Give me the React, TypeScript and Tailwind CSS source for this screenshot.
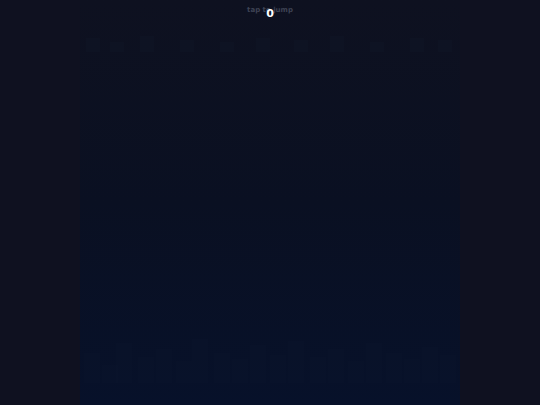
import React from "react";

const bottomBuildings = [
  [4, 30], [22, 18], [36, 40], [58, 26], [76, 34], [96, 22], [112, 44], [134, 30], [152, 24], [170, 38],
  [190, 28], [208, 42], [230, 26], [248, 34], [268, 22], [286, 40], [306, 30], [324, 24], [342, 36], [360, 28],
];
const topBuildings = [
  [6, 14], [30, 10], [60, 16], [100, 12], [140, 10], [176, 14], [214, 12], [250, 16], [290, 10], [330, 14], [358, 12],
];

export default function App() {
  return (
    <div className="relative flex h-[405px] w-[540px] justify-center overflow-hidden bg-[#0f1120]" style={{ fontFamily: '"DejaVu Sans", sans-serif' }}>
      <div className="relative h-full w-[380px] bg-gradient-to-b from-[#0e1120] via-[#0a1022] to-[#07112a]">
        <svg className="absolute left-0 top-[28px]" width="380" height="24" viewBox="0 0 380 24">
          {topBuildings.map(([x, h], i) => (
            <rect key={i} x={x} y={24 - h} width={14} height={h} fill="#141a2c" opacity={0.25} />
          ))}
        </svg>
        <svg className="absolute bottom-[22px] left-0" width="380" height="60" viewBox="0 0 380 60">
          {bottomBuildings.map(([x, h], i) => (
            <rect key={i} x={x} y={60 - h} width={16} height={h} fill="#0c1730" opacity={0.3} />
          ))}
        </svg>
      </div>
      <div className="absolute left-0 right-0 top-[7px] text-center text-[7px] font-bold leading-none text-[#3e4354]">tap to jump</div>
      <div className="absolute left-0 right-0 top-[8px] text-center text-[11px] font-bold leading-none text-white">0</div>
    </div>
  );
}
